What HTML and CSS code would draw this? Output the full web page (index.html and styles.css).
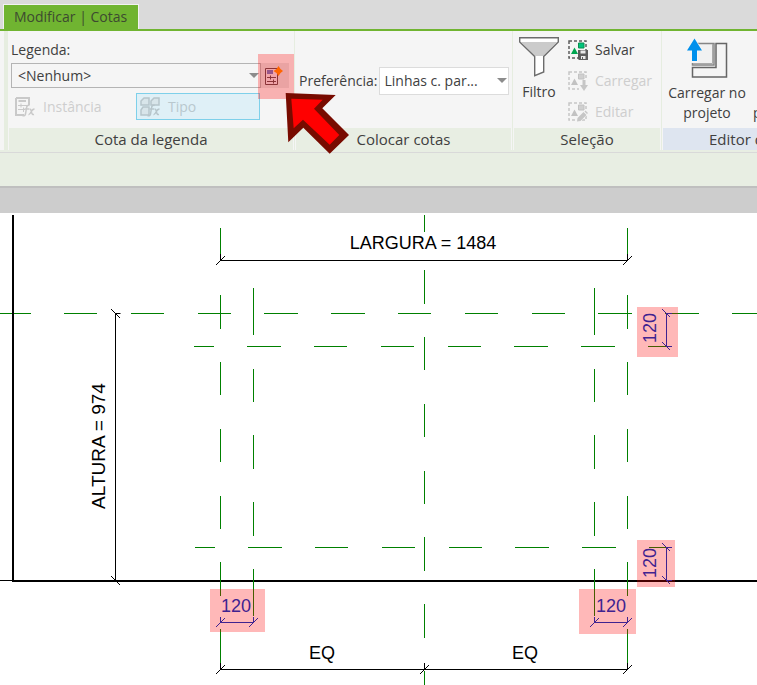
FILE: index.html
```html
<!DOCTYPE html>
<html lang="pt-BR">
<head>
<meta charset="utf-8">
<title>Modificar | Cotas</title>
<link rel="stylesheet" href="styles.css">
</head>
<body>
<header class="tabbar">
  <button class="tab" type="button">Modificar | Cotas</button>
</header>

<div class="ribbon">
  <section class="panel">
    <div class="panel-body legend">
      <label class="legend-label" for="legenda">Legenda:</label>
      <div class="legend-row">
        <div class="combo combo-legend">
          <select id="legenda"><option>&lt;Nenhum&gt;</option></select>
        </div>
        <div class="create">
          <button class="create-button" type="button" aria-label="Criar parâmetro">
            <svg width="20" height="20" viewBox="0 0 20 20">
              <path d="M2.500 2.500H14.500V18.500H2.500Z" fill="#ece4ea" stroke="#60484e"/>
              <path d="M4 4H10V8H4Z" fill="#7078c0"/>
              <path d="M4 11.500H13M4 15.500H13M7.500 9.500V13.500M10.500 13.500V17.500" stroke="#60484e" fill="none"/>
              <path d="M15.500 0L17.500 3L20 5L17.500 7L15.500 10L13.500 7L10.500 5L13.500 3Z" fill="#ff8c00"/>
            </svg>
          </button>
          <svg class="arrow" width="64" height="62" viewBox="285 92 64 62" aria-hidden="true">
            <path fill="#780b00" d="M285.700 93L335.700 95L322.300 108.300L349 135L329.700 153.700L303.300 127.700L288.300 142.300Z"/>
            <path fill="#f00" d="M291.300 98.700L322.700 99.700L314 108.700L339.300 135L329.700 144.700L303 119.700L293.700 128.300Z"/>
          </svg>
        </div>
      </div>
      <div class="toggles">
        <button class="toggle" type="button" disabled>
          <svg width="20" height="20" viewBox="0 0 20 20" fill="none" stroke="#c9c9c9">
            <path d="M1 1H14V8M1 1V18H9" stroke-width="2"/>
            <path d="M3.500 4H11" stroke-width="2"/>
            <path d="M3 8.500H12M3 12.500H10M6 6.500V10.500M8.500 10.500V15"/>
            <path d="M14.500 8.500Q12 7.500 11.500 11L10.500 17Q10 19.500 7.500 18.500M9.500 12H14M14.500 12Q16 12 16.500 15T19 17.500M19.500 12Q17.500 12 16 15T13.500 17.500" stroke-width="1.500"/>
          </svg>
          Instância
        </button>
        <button class="toggle toggle-on" type="button" disabled>
          <svg width="20" height="20" viewBox="0 0 20 20" fill="none" stroke="#b7c5cb">
            <path d="M1 4L4 1H9V8H1ZM11 4L14 1H19V8H11ZM1 13L3 10H9V18H1Z" stroke-width="1.500" fill="#d8e5ea"/>
            <path d="M14.500 8.500Q12 7.500 11.500 11L10.500 17Q10 19.500 7.500 18.500M9.500 12H14M14.500 12Q16 12 16.500 15T19 17.500M19.500 12Q17.500 12 16 15T13.500 17.500" stroke-width="1.500"/>
          </svg>
          Tipo
        </button>
      </div>
    </div>
    <h2 class="panel-title">Cota da legenda</h2>
  </section>

  <section class="panel">
    <div class="panel-body preference">
      <label for="preferencia">Preferência:</label>
      <div class="combo combo-light">
        <select id="preferencia"><option>Linhas c. par...</option></select>
      </div>
    </div>
    <h2 class="panel-title">Colocar cotas</h2>
  </section>

  <section class="panel">
    <div class="panel-body selection">
      <button class="big-button" type="button">
        <svg width="40" height="40" viewBox="0 0 40 40">
          <path d="M.500 .500H39.500V5L25 19.500V35L15.500 38.500V19.500L.500 5Z" fill="#fff"/>
          <path d="M2 5H38L24.500 19H15.500Z" fill="#cbcbcb"/>
          <path d="M.700 .700H39.300V5L24.700 19.500V35L15.700 38.700V19.500L.700 5Z" fill="none" stroke="#6c6c6c" stroke-width="1.400"/>
        </svg>
        Filtro
      </button>
      <div class="small-list">
        <button class="small-button" type="button">
          <svg width="20" height="20" viewBox="0 0 20 20">
            <path d="M1 1H18V18H1Z" fill="none" stroke="#5c5c5c" stroke-width="1.500" stroke-dasharray="3 2"/>
            <path d="M10.500 3H16V8H10.500Z" fill="#00c47c" stroke="#089050"/>
            <path d="M3 14L6.500 7.500L10 14Z" fill="#00a650"/>
            <path d="M10 10H20V20H11L10 19Z" fill="#5c5c5c"/>
            <path d="M12.500 10.500H17.500V13.500H12.500ZM13 16H17.500V19H13Z" fill="#e8e8e8"/>
            <path d="M14 17H15V19H14Z" fill="#5c5c5c"/>
          </svg>
          Salvar
        </button>
        <button class="small-button" type="button" disabled>
          <svg width="20" height="20" viewBox="0 0 20 20">
            <path d="M1 1H18V18H1Z" fill="none" stroke="#c6c6c6" stroke-width="1.500" stroke-dasharray="3 2"/>
            <path d="M10.500 3H16V8H10.500Z" fill="#d0d0d0" stroke="#c2c2c2"/>
            <path d="M3 14L6.500 7.500L10 14Z" fill="#c2c2c2"/>
            <path d="M11 9H20V20H11Z" fill="#f5f5f5"/>
            <path d="M14.500 9H17.500V14H20L16 20L12 14H14.500Z" fill="#c6c6c6"/>
          </svg>
          Carregar
        </button>
        <button class="small-button" type="button" disabled>
          <svg width="20" height="20" viewBox="0 0 20 20">
            <path d="M1 1H18V18H1Z" fill="none" stroke="#c6c6c6" stroke-width="1.500" stroke-dasharray="3 2"/>
            <path d="M10.500 3H16V8H10.500Z" fill="#d0d0d0" stroke="#c2c2c2"/>
            <path d="M3 14L6.500 7.500L10 14Z" fill="#c2c2c2"/>
            <path d="M8 20V16L16 9H20V12L12 20Z" fill="#f5f5f5"/>
            <path d="M9.500 16L15.500 10L18.500 13L12.500 19L9 19.500ZM16.500 9.500L17.500 8.500L20 11L19 12Z" fill="#c6c6c6"/>
          </svg>
          Editar
        </button>
      </div>
    </div>
    <h2 class="panel-title">Seleção</h2>
  </section>

  <section class="panel panel-editor">
    <div class="panel-body editor">
      <button class="big-button big-wide" type="button">
        <svg width="42" height="40" viewBox="0 0 42 40">
          <path d="M8.500 5.500H28V27H6.500V20H8.500Z" fill="#f1f1f1" stroke="#858585" stroke-width="1.500"/>
          <path d="M30 5.500H40.500V39H6.500V29.500H30Z" fill="#f5f5f5" stroke="#666" stroke-width="1.500"/>
          <path d="M26.500 6V25.500H7" fill="none" stroke="#aaa"/>
          <path d="M5 25V12H0L8.500 0L17 12H12V25Z" fill="#f5f5f5"/>
          <path d="M6 23V12.500H1L8.500 .500L16 12.500H11V23Z" fill="#0090ec"/>
        </svg>
        Carregar no<br>projeto
      </button>
      <button class="next-button" type="button">p</button>
    </div>
    <h2 class="panel-title panel-title-editor">Editor d</h2>
  </section>
</div>

<div class="options-bar"></div>
<div class="view-gap"></div>

<main class="view">
  <svg class="drawing" viewBox="0 213 757 472">
    <g class="reference">
      <path d="M0 313.500H31M64 313.500H97M131 313.500H164M198 313.500H231M264 313.500H298M331 313.500H365M398 313.500H431M465 313.500H498M532 313.500H565M598 313.500H632M665 313.500H699M732 313.500H757"/>
      <path d="M194 346.500H214M247 346.500H281M314 346.500H347M381 346.500H414M448 346.500H481M514 346.500H548M581 346.500H615M648 346.500H668"/>
      <path d="M195 547.500H215M248 547.500H282M315 547.500H348M382 547.500H415M449 547.500H482M515 547.500H549M582 547.500H616M649 547.500H668"/>
      <path d="M424.500 215V232M424.500 270V304M424.500 337V370M424.500 404V437M424.500 471V504M424.500 537V571M424.500 604V638M424.500 671V685"/>
    </g>
    <path class="wall" d="M13 215V581H757"/>
    <path class="dimension" d="M0 580.500H13"/>
    <g class="reference">
      <path d="M220.500 228V261M220.500 295V329M220.500 362V395M220.500 429V462M220.500 496V529M220.500 562V596M220.500 629V669"/>
      <path d="M253.500 288V335M253.500 369V402M253.500 435V469M253.500 502V536M253.500 569V616"/>
      <path d="M594.500 288V335M594.500 369V402M594.500 435V469M594.500 502V536M594.500 569V616"/>
      <path d="M627.500 228V261M627.500 295V329M627.500 362V395M627.500 429V462M627.500 496V529M627.500 562V596M627.500 629V669"/>
    </g>
    <g class="highlight">
      <rect x="637" y="307" width="41" height="50"/>
      <rect x="637" y="540" width="38" height="47"/>
      <rect x="210" y="589" width="55" height="43"/>
      <rect x="579" y="589" width="57" height="45"/>
    </g>
    <g class="dimension">
      <path d="M220.500 254V260.500H627.500V254M120.500 313.500H115.500V580.500M220.500 663V669.500H627.500V663M424.500 663V669.500"/>
      <path class="tick" d="M216 265L225 256M623 265L632 256M111 309L120 318M111 576L120 585M216 674L225 665M420 674L429 665M623 674L632 665"/>
    </g>
    <g class="dimension selected">
      <path d="M672 313.500H666.500V346.500H672M672 547.500H666.500V580.500H672M220.500 617V622.500H253.500V617M594.500 617V622.500H627.500V617"/>
      <path class="tick" d="M662 309L670 317M662 342L670 350M662 543L670 551M662 576L670 584M216 627L225 618M249 627L258 618M590 627L599 618M623 627L632 618"/>
    </g>
    <g class="caption">
      <text x="423" y="249">LARGURA = 1484</text>
      <text x="322" y="659">EQ</text>
      <text x="525" y="659">EQ</text>
      <text class="caption-tall" transform="translate(105 446) rotate(-90)">ALTURA = 974</text>
    </g>
    <g class="caption caption-selected">
      <text x="236" y="612">120</text>
      <text x="611" y="612">120</text>
      <text transform="translate(656 328) rotate(-90)">120</text>
      <text transform="translate(656 563) rotate(-90)">120</text>
    </g>
  </svg>
</main>
</body>
</html>
```
FILE: styles.css
```css
* {
  box-sizing: border-box;
}

body {
  margin: 0;
  background: #fff;
  color: #404040;
  font: 14px/20px "Open Sans", "Noto Sans", sans-serif;
  overflow-x: hidden;
}

button,
select {
  margin: 0;
  padding: 0;
  border: 0;
  background: none;
  color: inherit;
  font: inherit;
}

button:disabled {
  color: #cecece;
}

svg {
  display: block;
  flex: none;
}

.tabbar {
  display: flex;
  align-items: flex-end;
  height: 31px;
  padding-left: 3px;
  border-bottom: 2px solid #70b431;
  background: #dadada;
}

.tab {
  height: 25px;
  padding: 0 11px 0 10px;
  border: 1px solid #f2f2f2;
  border-bottom: 0;
  background: #70b431;
  color: #3d4a30;
}

.ribbon {
  display: grid;
  grid-template-columns: 290px 218px 149px 1fr;
  border-left: 4px solid #f5f5f5;
  background: #f5f5f5;
}

.panel {
  display: flex;
  flex-direction: column;
  min-width: 0;
  border-left: 1px solid #e6ede0;
}

.panel:first-child {
  border-left-width: 4px;
}

.panel-editor {
  overflow: hidden;
}

.panel-body {
  height: 97px;
}

.panel-title {
  height: 22px;
  margin: 0 1px;
  background: #e8eee3;
  font-size: 15px;
  font-weight: 400;
  line-height: 23px;
  text-align: center;
  white-space: nowrap;
}

.panel-title-editor {
  margin-right: 0;
  padding-left: 46px;
  background: #dee5f0;
  text-align: left;
}

.combo {
  position: relative;
}

.combo::after {
  content: "";
  position: absolute;
  top: 50%;
  right: 2px;
  margin-top: -3px;
  border: 5px solid transparent;
  border-top-color: #8c8c8c;
  border-bottom: 0;
  pointer-events: none;
}

.combo select {
  width: 100%;
  height: 100%;
  padding: 0 4px;
  border: 1px solid #b4b4b4;
  appearance: none;
}

.legend {
  padding: 9px 0 0 3px;
}

.legend-label {
  display: block;
  height: 23px;
}

.legend-row {
  display: flex;
}

.combo-legend {
  width: 250px;
  height: 25px;
}

.combo-legend select {
  padding-left: 6px;
}

.create {
  position: relative;
}

.create::after {
  content: "";
  position: absolute;
  inset: -9px -5px -11px -3px;
  background: rgba(255, 0, 0, 0.28);
  pointer-events: none;
}

.create-button {
  display: flex;
  align-items: center;
  width: 28px;
  height: 25px;
  padding-left: 2px;
  background: #e2e2e2;
}

.arrow {
  position: absolute;
  z-index: 1;
  top: 29px;
  left: 24px;
}

.toggles {
  display: grid;
  grid-template-columns: 125px 124px;
  margin-top: 5px;
}

.toggle {
  display: flex;
  align-items: center;
  gap: 8px;
  height: 27px;
  padding-left: 4px;
}

.toggle-on {
  padding-left: 3px;
  border: 1px solid #7ed0ea;
  background: #dff0f7;
}

.toggle-on:disabled {
  color: #b9c8ce;
}

.preference {
  display: flex;
  align-items: center;
  gap: 2px;
  padding: 2px 0 0 4px;
  white-space: nowrap;
}

.combo-light {
  flex: none;
  width: 130px;
  height: 28px;
}

.combo-light select {
  border-color: #dcdcdc;
  background: #fff;
}

.selection {
  display: flex;
  gap: 8px;
  padding: 3px 0 0 5px;
}

.big-button {
  display: flex;
  flex-direction: column;
  align-items: center;
  justify-content: flex-start;
  gap: 5px;
  width: 42px;
  padding-top: 3px;
}

.big-wide {
  display: block;
  flex: none;
  width: 90px;
  padding-top: 7px;
  text-align: center;
}

.big-wide svg {
  margin: 0 auto 5px;
}

.small-list {
  display: flex;
  flex-direction: column;
}

.small-button {
  display: flex;
  align-items: center;
  gap: 7px;
  height: 31px;
}

.editor {
  display: flex;
  align-items: flex-start;
}

.next-button {
  flex: none;
  padding: 72px 0 0 1px;
}

.options-bar {
  height: 36px;
  border-top: 2px solid #e8eee3;
  background: linear-gradient(#d9d9d9 1px, #e8eee3 1px);
}

.view-gap {
  height: 27px;
  border-top: 2px solid #bfbfbf;
  background: #cdcdcd;
}

.drawing {
  width: 100%;
  height: auto;
}

.reference {
  fill: none;
  stroke: #008000;
}

.wall {
  fill: none;
  stroke: #000;
  stroke-width: 2;
}

.dimension {
  fill: none;
  stroke: #000;
}

.selected {
  stroke: #3f2390;
}

.highlight {
  fill: rgba(255, 0, 0, 0.28);
}

.caption {
  font: 18px "Liberation Sans", Arial, sans-serif;
  text-anchor: middle;
}

.caption-tall {
  font-size: 19px;
}

.caption-selected {
  fill: #3f2390;
}
```
